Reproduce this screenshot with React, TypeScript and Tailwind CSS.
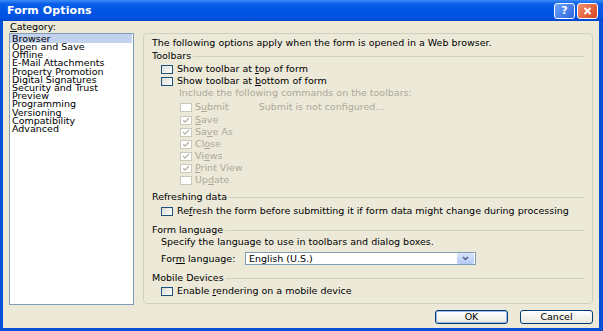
import React from "react";

function Check({ color }: { color: string }) {
  return (
    <svg width="8" height="6" viewBox="0 0 8 6" className="block">
      <polyline points="1,3 3,5 7,1" fill="none" stroke={color} strokeWidth="1.4" />
    </svg>
  );
}

function Box({ checked, disabled }: { checked?: boolean; disabled?: boolean }) {
  return disabled ? (
    <span className="w-[12px] h-[9px] border border-[#CAC8BB] bg-white flex items-center justify-center shrink-0">
      {checked && <Check color="#B7B5A8" />}
    </span>
  ) : (
    <span className="w-[12px] h-[9px] border border-[#1C5180] bg-[linear-gradient(135deg,#DCDBD5,#FFFFFF)] flex items-center justify-center shrink-0">
      {checked && <Check color="#21A121" />}
    </span>
  );
}

function Group({ title, className }: { title: string; className?: string }) {
  return (
    <div className={"flex items-center h-[12px] pr-[8px] " + (className || "")}>
      <span className="whitespace-nowrap">{title}</span>
      <span className="flex-1 ml-[2px] h-px bg-[#D0D0BF]" />
    </div>
  );
}

function U({ children }: { children: React.ReactNode }) {
  return <span className="underline underline-offset-1">{children}</span>;
}

function Cb({ children, className }: { children: React.ReactNode; className?: string }) {
  return (
    <div className={"flex items-center h-[12px] pl-[9px] " + (className || "")}>
      <Box />
      <span className="ml-[4px] whitespace-nowrap">{children}</span>
    </div>
  );
}

function DCb({ children, checked, className }: { children: React.ReactNode; checked?: boolean; className?: string }) {
  return (
    <div className={"flex items-center h-[12px] pl-[28px] text-[#ACA899] " + (className || "")}>
      <Box disabled checked={checked} />
      <span className="ml-[3px] whitespace-nowrap">{children}</span>
    </div>
  );
}

export default function App() {
  const items = [
    "Browser",
    "Open and Save",
    "Offline",
    "E-Mail Attachments",
    "Property Promotion",
    "Digital Signatures",
    "Security and Trust",
    "Preview",
    "Programming",
    "Versioning",
    "Compatibility",
    "Advanced",
  ];
  return (
    <div className="w-[603px] h-[331px] flex flex-col bg-[#0A4FD8] font-['DejaVu_Sans',sans-serif] text-[9.5px] text-black overflow-hidden">
      <div className="h-[21px] flex items-center pl-[7px] pr-[5px] bg-[linear-gradient(to_bottom,#3A8CF6_0%,#0B60EA_18%,#0056E6_50%,#0052E0_85%,#0044CC_100%)]">
        <span className="text-white font-bold text-[11px] leading-none tracking-[0.1px] flex-1">Form Options</span>
        <div className="flex gap-[2px]">
          <div className="w-[21px] h-[16px] rounded-[3px] border border-white bg-[linear-gradient(135deg,#6FA2F8,#2A63E0)] flex items-center justify-center text-white font-bold text-[11px] leading-none">?</div>
          <div className="w-[21px] h-[16px] rounded-[3px] border border-white bg-[linear-gradient(135deg,#F09070,#D8451E)] flex items-center justify-center">
            <svg width="9" height="8" viewBox="0 0 9 8">
              <path d="M1.5 1 L7.5 7 M7.5 1 L1.5 7" stroke="white" strokeWidth="1.8" />
            </svg>
          </div>
        </div>
      </div>
      <div className="flex-1 flex flex-col ml-[3px] mr-[4px] mb-[3px] bg-[#ECE9D8]">
        <div className="flex pl-[6px]">
          <div className="w-[125px] flex flex-col">
            <div className="h-[12px] leading-[10px] pl-[1px] pt-[1px]">
              <span className="border-b border-black leading-[9px] inline-block">C</span>ategory:
            </div>
            <div className="h-[272px] border border-[#7F9DB9] bg-white">
              {items.map((it, i) =>
                i === 0 ? (
                  <div key={it} className="h-[9px] leading-[9px] pl-[2px] bg-[#C2D1EE] mr-[1px] whitespace-nowrap">
                    {it}
                  </div>
                ) : (
                  <div key={it} className="h-[8.2px] leading-[8.2px] pl-[2px] whitespace-nowrap">
                    {it}
                  </div>
                )
              )}
            </div>
          </div>
          <div className="ml-[9px] mt-[12px] w-[450px] h-[271px] border border-[#D0D0BF] rounded-[4px] flex flex-col pl-[8px] pt-[3px]">
            <div className="h-[12px] leading-[12px] whitespace-nowrap">
              The following options apply when the form is opened in a Web browser.
            </div>
            <Group title="Toolbars" className="mt-[1px]" />
            <Cb className="mt-[1px]">
              Show toolbar at <U>t</U>op of form
            </Cb>
            <Cb>
              Show toolbar at <U>b</U>ottom of form
            </Cb>
            <div className="h-[12px] leading-[12px] pl-[27px] text-[#ACA899] whitespace-nowrap">
              Include the following commands on the toolbars:
            </div>
            <div className="flex items-center mt-[1px]">
              <DCb>
                S<U>u</U>bmit
              </DCb>
              <span className="ml-[30px] text-[#ACA899] whitespace-nowrap">Submit is not configured...</span>
            </div>
            <DCb checked>
              <U>S</U>ave
            </DCb>
            <DCb checked>
              Sa<U>v</U>e As
            </DCb>
            <DCb checked>
              Cl<U>o</U>se
            </DCb>
            <DCb checked>
              Vi<U>e</U>ws
            </DCb>
            <DCb checked>
              <U>P</U>rint View
            </DCb>
            <DCb>
              Up<U>d</U>ate
            </DCb>
            <Group title="Refreshing data" className="mt-[5px]" />
            <Cb className="mt-[2px]">
              Re<U>f</U>resh the form before submitting it if form data might change during processing
            </Cb>
            <Group title="Form language" className="mt-[7px]" />
            <div className="h-[12px] leading-[12px] pl-[9px] whitespace-nowrap">
              Specify the language to use in toolbars and dialog boxes.
            </div>
            <div className="flex items-center h-[13px] mt-[4px] pl-[9px]">
              <span className="w-[84px] whitespace-nowrap">
                For<U>m</U> language:
              </span>
              <div className="w-[231px] h-[13px] border border-[#7F9DB9] bg-white flex items-center">
                <span className="flex-1 pl-[3px] whitespace-nowrap">English (U.S.)</span>
                <div className="w-[17px] h-[11px] mr-[1px] rounded-[2px] bg-[linear-gradient(to_bottom,#D8E4FC,#B4CBF8)] flex items-center justify-center">
                  <svg width="7" height="5" viewBox="0 0 7 5">
                    <polyline points="1,1 3.5,3.5 6,1" fill="none" stroke="#4D6185" strokeWidth="1.5" />
                  </svg>
                </div>
              </div>
            </div>
            <Group title="Mobile Devices" className="mt-[7px]" />
            <Cb className="mt-[1px]">
              Enable <U>r</U>endering on a mobile device
            </Cb>
          </div>
        </div>
        <div className="flex justify-end gap-[12px] pr-[6px] mt-[5px]">
          <div className="w-[73px] h-[14px] rounded-[3px] border border-[#003C74] bg-[linear-gradient(to_bottom,#FFFFFF,#EAE8DD)] flex items-center justify-center shadow-[inset_0_0_0_1px_#9DB9EB]">
            OK
          </div>
          <div className="w-[73px] h-[14px] rounded-[3px] border border-[#003C74] bg-[linear-gradient(to_bottom,#FFFFFF,#EAE8DD)] flex items-center justify-center">
            Cancel
          </div>
        </div>
      </div>
    </div>
  );
}
